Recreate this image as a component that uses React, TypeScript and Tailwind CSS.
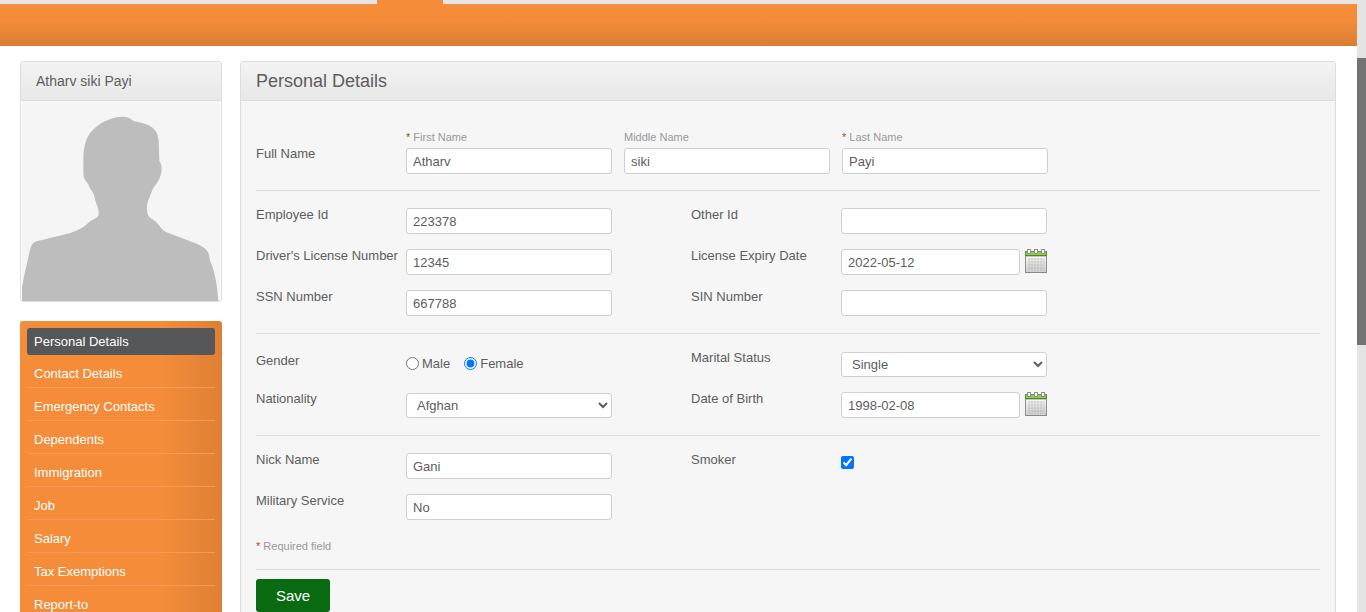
import type { ReactNode } from 'react';

const menuItems = [
  'Contact Details',
  'Emergency Contacts',
  'Dependents',
  'Immigration',
  'Job',
  'Salary',
  'Tax Exemptions',
  'Report-to',
];

const inputClass =
  'block h-[26px] rounded-[3px] border border-[#cfcfcf] bg-white px-1.5 text-[13px] text-[#5d5d5d] outline-none';

function CalendarIcon() {
  return (
    <svg width="22" height="24" viewBox="0 0 22 24" shapeRendering="crispEdges" aria-hidden="true">
      <defs>
        <linearGradient id="sheet" x1="0" y1="0" x2="0" y2="1">
          <stop offset="0" stopColor="#fbfbfb" />
          <stop offset="1" stopColor="#cfcdcf" />
        </linearGradient>
      </defs>
      <rect x="0.5" y="6.5" width="21" height="17" fill="url(#sheet)" stroke="#8c898c" />
      <path d="M1 7.5H21" stroke="#c6c6c6" />
      <path
        d="M3 10H19M3 13H19M3 16H19M3 19H19"
        stroke="#8c898c"
        strokeOpacity="0.12"
        strokeWidth="2"
      />
      <path
        d="M4 9V22M7 9V22M10 9V22M13 9V22M16 9V22M18.5 9V22"
        stroke="#8c898c"
        strokeOpacity="0.14"
        strokeWidth="2"
      />
      <rect x="0.5" y="2.5" width="21" height="4" fill="#8fd04a" stroke="#5f9a24" />
      <path d="M0 6.5H22" stroke="#4c8a1f" />
      <g fill="#ffffff" stroke="#8f8f93">
        <rect x="2.5" y="0.5" width="3" height="4" />
        <rect x="9.5" y="0.5" width="3" height="4" />
        <rect x="16.5" y="0.5" width="3" height="4" />
      </g>
    </svg>
  );
}

function Avatar() {
  return (
    <svg viewBox="63 3 600 600" className="block w-full" role="img" aria-label="Employee photo">
      <rect x="66" y="3" width="594" height="600" fill="#f5f5f5" />
      <path
        fill="#bdbdbd"
        d="M66 603V560L76 511C86 475 88 442 99 430C103 425 108 424 116 422L185 406C225 395 240 390 262 371C275 358 290 355 295 347C298 330 294 323 289 311C284 297 284 284 277 275C270 268 268 260 264 252C255 241 251 235 250 220V170C252 135 258 112 276 92C300 66 335 51 368 50C390 50 393 60 404 64C420 69 440 70 455 81C470 92 475 105 476 125L478 182C484 193 486 200 484 215C480 245 462 256 457 270C448 296 440 303 441 330C443 355 453 353 466 364C480 377 483 388 496 395L590 431C612 441 626 450 628 470C630 490 641 500 644 525C650 550 653 575 655 603Z"
      />
    </svg>
  );
}

function Section({ children }: { children: ReactNode }) {
  return <div className="border-b border-[#dddddd] py-[17px]">{children}</div>;
}

function Columns({ children }: { children: ReactNode }) {
  return <div className="grid grid-cols-[435px_1fr] gap-y-[15px]">{children}</div>;
}

function Field({ id, label, children }: { id: string; label: string; children: ReactNode }) {
  return (
    <div className="flex h-[26px] items-start">
      <label htmlFor={id} className="w-[150px] shrink-0 whitespace-nowrap leading-[14px]">
        {label}
      </label>
      {children}
    </div>
  );
}

function TextField({ id, label, value }: { id: string; label: string; value?: string }) {
  return (
    <Field id={id} label={label}>
      <input id={id} type="text" defaultValue={value} className={`${inputClass} w-[206px]`} />
    </Field>
  );
}

function DateField({ id, label, value }: { id: string; label: string; value: string }) {
  return (
    <Field id={id} label={label}>
      <input id={id} type="text" defaultValue={value} className={`${inputClass} w-[179px]`} />
      <button type="button" className="ml-[5px]" aria-label={`Choose ${label}`}>
        <CalendarIcon />
      </button>
    </Field>
  );
}

function SelectField({ id, label, options }: { id: string; label: string; options: string[] }) {
  return (
    <Field id={id} label={label}>
      <select
        id={id}
        className="mt-px h-[25px] w-[206px] rounded-[3px] border border-[#cfcfcf] bg-white px-1.5 text-[13px] text-[#5d5d5d]"
      >
        {options.map((o) => (
          <option key={o}>{o}</option>
        ))}
      </select>
    </Field>
  );
}

function NameField({ id, label, value, required }: { id: string; label: string; value: string; required?: boolean }) {
  return (
    <div className="flex flex-col gap-1">
      <label htmlFor={id} className="text-[11px] leading-[14px] text-[#999999]">
        {required && <span className="text-[#aa4935]">* </span>}
        {label}
      </label>
      <input id={id} type="text" defaultValue={value} className={`${inputClass} w-[206px]`} />
    </div>
  );
}

export default function App() {
  return (
    <div className="flex h-screen overflow-hidden bg-white font-['Liberation_Sans',Arial,sans-serif] text-[13px] text-[#5d5d5d]">
      <div className="min-w-0 flex-1">
        <header>
          <div className="h-1 bg-[#e6e6e6] pl-[377px]">
            <div className="h-1 w-[66px] bg-[#f48c3a]" />
          </div>
          <div className="h-[42px] bg-linear-to-b from-[#f48c3a] from-40% to-[#d97d32]" />
        </header>

        <main className="flex items-start gap-[18px] pt-[15px] pr-[21px] pl-5">
          <aside className="flex w-[202px] shrink-0 flex-col gap-[19px]">
            <section className="overflow-hidden rounded-[3px] border border-[#dddddd]">
              <h2 className="flex h-[39px] items-center border-b border-[#dddddd] bg-linear-to-b from-[#f3f3f3] to-[#e8e8e8] px-[15px] text-sm">
                Atharv siki Payi
              </h2>
              <Avatar />
            </section>

            <nav className="rounded-[3px] bg-linear-to-r from-[#f48c3a] from-70% to-[#de8034] p-[7px] text-white">
              <a href="#personal" className="block rounded-[3px] bg-[#555759] px-[7px] py-[5px] leading-[17px]">
                Personal Details
              </a>
              {menuItems.map((item) => (
                <a
                  key={item}
                  href="#section"
                  className="block border-b border-[#f69b55] px-[7px] pt-[11px] pb-[5px] leading-4"
                >
                  {item}
                </a>
              ))}
            </nav>
          </aside>

          <section className="min-w-0 flex-1 rounded-[3px] border border-[#dddddd] bg-[#f6f6f6]">
            <h1 className="flex h-[39px] items-center border-b border-[#dddddd] bg-linear-to-b from-[#f3f3f3] to-[#e8e8e8] px-[15px] text-lg">
              Personal Details
            </h1>
            <form className="px-[15px] pb-[15px]">
              <div className="flex border-b border-[#dddddd] pt-[29px] pb-4">
                <div className="w-[150px] shrink-0 pt-4 leading-4">Full Name</div>
                <div className="flex gap-3">
                  <NameField id="first" label="First Name" value="Atharv" required />
                  <NameField id="middle" label="Middle Name" value="siki" />
                  <NameField id="last" label="Last Name" value="Payi" required />
                </div>
              </div>

              <Section>
                <Columns>
                  <TextField id="employee" label="Employee Id" value="223378" />
                  <TextField id="other" label="Other Id" />
                  <TextField id="license" label="Driver's License Number" value="12345" />
                  <DateField id="expiry" label="License Expiry Date" value="2022-05-12" />
                  <TextField id="ssn" label="SSN Number" value="667788" />
                  <TextField id="sin" label="SIN Number" />
                </Columns>
              </Section>

              <Section>
                <Columns>
                  <div role="radiogroup" aria-labelledby="gender" className="flex h-[25px] items-center">
                    <span id="gender" className="w-[150px] self-start pt-[3px] leading-[14px]">
                      Gender
                    </span>
                    <label className="mr-3.5 flex items-center gap-[3px]">
                      <input type="radio" name="gender" className="size-[13px]" />
                      Male
                    </label>
                    <label className="flex items-center gap-[3px]">
                      <input type="radio" name="gender" defaultChecked className="size-[13px]" />
                      Female
                    </label>
                  </div>
                  <SelectField id="marital" label="Marital Status" options={['Single', 'Married', 'Other']} />
                  <SelectField id="nation" label="Nationality" options={['Afghan', 'Albanian', 'Algerian']} />
                  <DateField id="birth" label="Date of Birth" value="1998-02-08" />
                </Columns>
              </Section>

              <div className="border-b border-[#dddddd] pt-[17px] pb-4">
                <Columns>
                  <TextField id="nick" label="Nick Name" value="Gani" />
                  <Field id="smoker" label="Smoker">
                    <input id="smoker" type="checkbox" defaultChecked className="mt-[3px] size-[13px]" />
                  </Field>
                  <TextField id="military" label="Military Service" value="No" />
                </Columns>
                <p className="mt-[19px] text-[11px] leading-[14px] text-[#999999]">
                  <span className="text-[#aa4935]">*</span> Required field
                </p>
              </div>

              <button
                type="button"
                className="mt-[9px] block h-[33px] rounded-[3px] bg-[#0a6a12] px-5 pt-px text-[15px] text-white"
              >
                Save
              </button>
            </form>
          </section>
        </main>
      </div>

      <div className="w-[9px] shrink-0 bg-[#e4e4e4] pt-[58px]" aria-hidden="true">
        <div className="h-[287px] bg-[#737373]" />
      </div>
    </div>
  );
}
